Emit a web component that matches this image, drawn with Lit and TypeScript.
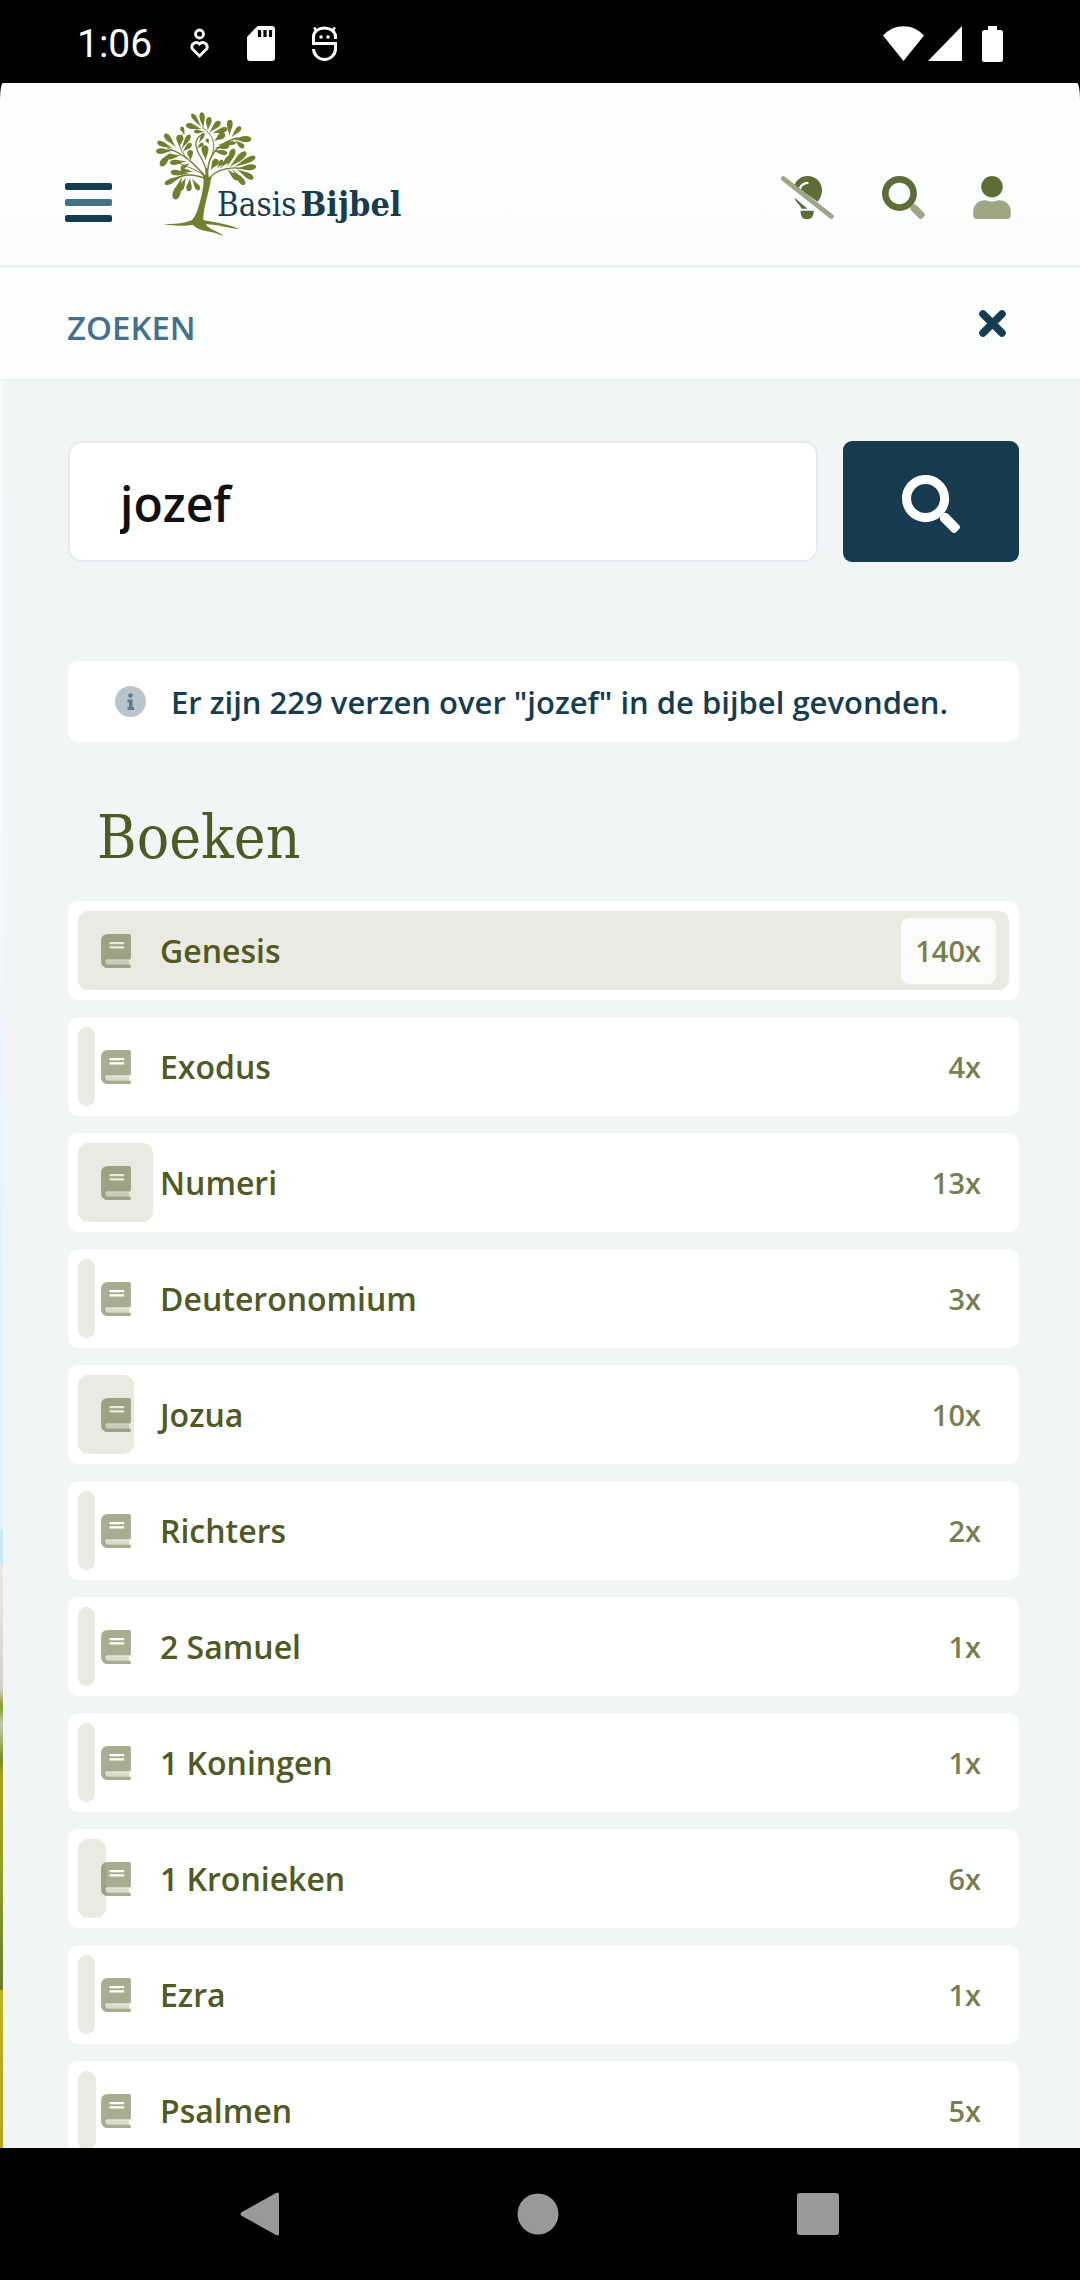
import { LitElement, html, svg, css } from "lit";
import { customElement, property, state } from "lit/decorators.js";

interface Book {
  name: string;
  count: number;
}

const BOOKS: Book[] = [
  { name: "Genesis", count: 140 },
  { name: "Exodus", count: 4 },
  { name: "Numeri", count: 13 },
  { name: "Deuteronomium", count: 3 },
  { name: "Jozua", count: 10 },
  { name: "Richters", count: 2 },
  { name: "2 Samuel", count: 1 },
  { name: "1 Koningen", count: 1 },
  { name: "1 Kronieken", count: 6 },
  { name: "Ezra", count: 1 },
  { name: "Psalmen", count: 5 },
];

/* Leaves of the tree: base x, base y, tip x, tip y, width. */
const LEAVES: number[][] = [
  [190, 86, 185, 37, 15], [184, 82, 155, 41, 13], [186, 88, 138, 74, 16], [194, 96, 162, 94, 11],
  [203, 92, 208, 51, 16], [208, 98, 240, 64, 17], [216, 100, 262, 86, 15], [268, 108, 270, 59, 17],
  [274, 112, 302, 80, 14], [276, 116, 334, 118, 18], [284, 120, 312, 143, 14], [222, 124, 254, 100, 19],
  [134, 104, 124, 80, 11], [118, 142, 120, 104, 21], [124, 148, 150, 104, 14], [128, 156, 154, 130, 14],
  [108, 142, 74, 102, 16], [100, 146, 52, 126, 15], [98, 152, 48, 154, 16], [94, 156, 62, 198, 19],
  [124, 166, 78, 172, 16], [140, 184, 90, 188, 15], [150, 190, 122, 206, 11], [152, 182, 150, 150, 17],
  [176, 130, 192, 100, 10], [170, 145, 190, 130, 11], [197, 182, 194, 136, 20], [206, 132, 200, 116, 10],
  [224, 144, 268, 138, 14], [220, 152, 262, 160, 14], [232, 134, 288, 128, 11], [212, 210, 232, 178, 19],
  [232, 204, 248, 180, 12], [240, 204, 274, 168, 16], [262, 200, 282, 146, 17], [268, 202, 318, 156, 18],
  [280, 202, 346, 170, 16], [288, 206, 348, 200, 17], [290, 208, 340, 236, 16], [276, 208, 314, 254, 16],
  [262, 208, 294, 240, 14], [160, 216, 122, 210, 12], [148, 222, 92, 216, 16], [130, 226, 74, 252, 15],
  [126, 230, 104, 298, 22], [138, 232, 120, 272, 15], [150, 234, 146, 274, 16], [156, 236, 178, 270, 14],
];

function leafPath([bx, by, tx, ty, w]: number[]): string {
  const dx = tx - bx;
  const dy = ty - by;
  const len = Math.hypot(dx, dy);
  const nx = (-dy / len) * w * 0.62;
  const ny = (dx / len) * w * 0.62;
  const at = (t: number, s: number) =>
    `${(bx + dx * t + nx * s).toFixed(1)} ${(by + dy * t + ny * s).toFixed(1)}`;
  return `M${at(0, 0)}C${at(0.3, 0.2)} ${at(0.5, 0.8)} ${at(0.72, 0.85)}C${at(0.9, 0.85)} ${at(1, 0.45)} ${at(1, 0)}C${at(1, -0.45)} ${at(0.9, -0.85)} ${at(0.72, -0.85)}C${at(0.5, -0.8)} ${at(0.3, -0.2)} ${at(0, 0)}z`;
}

const tree = html`
  <svg class="tree" viewBox="48 36 300 375" aria-hidden="true">
    <g fill="none" stroke="#71802f" stroke-linecap="round" stroke-width="4">
      <path d="M197 234C165 190 125 158 84 146" />
      <path d="M192 222C160 190 122 168 116 126C116 112 126 104 132 98" stroke-width="3" />
      <path d="M198 212C196 180 164 158 168 128C171 112 182 104 192 100" />
      <path d="M203 212C206 160 238 130 290 114" />
      <path d="M208 184C232 136 222 106 188 84" stroke-width="3" />
      <path d="M206 236C232 204 276 200 314 206" />
      <path d="M196 236C164 222 132 222 108 236" />
      <path d="M190 226C164 204 128 196 104 184" stroke-width="3" />
    </g>
    <path fill="#71802f" d="M188 226C195 240 188 280 178 312C172 334 166 350 156 360C132 372 100 371 70 373C100 378 136 379 158 374C176 396 214 390 250 408C236 394 208 390 197 373C230 372 264 385 298 388C270 372 226 368 190 360C188 330 206 284 214 232L206 230L204 205L197 205L196 224z" />
    <g fill="#71802f">${LEAVES.map((l) => svg`<path d=${leafPath(l)} />`)}</g>
  </svg>
`;

const RING =
  "M208 0C93.1 0 0 93.1 0 208s93.1 208 208 208 208-93.1 208-208S322.9 0 208 0zm0 336a128 128 0 1 1 0-256 128 128 0 0 1 0 256z";
const HANDLE =
  "M505 442.7L405.3 343c-4.5-4.5-10.6-7-17-7H372a209 209 0 0 1-36 36v16.3c0 6.4 2.5 12.5 7 17l99.7 99.7c9.4 9.4 24.6 9.4 33.9 0l28.3-28.3c9.4-9.4 9.4-24.6.1-34z";

@customElement("status-bar")
export class StatusBar extends LitElement {
  static styles = css`
    :host {
      display: flex;
      align-items: center;
      justify-content: space-between;
      height: 83px;
      padding: 4px 77px 0 77px;
      box-sizing: border-box;
      background: #000;
      color: #fff;
      font: 400 39px/44px Roboto, "Liberation Sans", sans-serif;
      flex: none;
    }
    .group {
      display: flex;
      align-items: center;
    }
    .left { gap: 37px; }
    .right { gap: 4px; }
    .battery { margin-left: 16px; }
    svg { display: block; }
  `;

  render() {
    return html`
      <div class="group left">
        <time>1:06</time>
        <svg width="21" height="31" viewBox="0 0 21 31" fill="none" stroke="#fff" stroke-width="2.8" aria-hidden="true">
          <circle cx="10.5" cy="6" r="4" />
          <path d="M10.5 28L3 20.5A4.5 4.500 0 0 1 10.5 16A4.5 4.500 0 0 1 18 20.5z" />
        </svg>
        <svg width="28" height="35" viewBox="0 0 28 35" aria-hidden="true">
          <path fill="#fff" d="M10.5 0H25a3 3 0 0 1 3 3V32a3 3 0 0 1-3 3H3a3 3 0 0 1-3-3V11z" />
          <path stroke="#000" stroke-width="3.2" d="M12.5 4v7M18 4v7M23.5 4v7" />
        </svg>
        <svg width="25" height="35" viewBox="0 0 25 35" fill="none" stroke="#fff" stroke-width="3" aria-hidden="true">
          <path d="M23.5 13V11C23.5 5 18 2 12.5 2S1.5 5 1.5 11V17.5H23.5V23C23.5 29 18 33.5 12.5 33.5S1.5 29 1.5 23" />
          <path d="M2 1.5L5 5M23 1.5L20 5" stroke-width="2.5" />
          <circle cx="9" cy="11" r="1.8" fill="#fff" stroke="none" />
          <circle cx="16" cy="11" r="1.8" fill="#fff" stroke="none" />
        </svg>
      </div>
      <div class="group right">
        <svg width="41" height="35" viewBox="0 0 41 35" fill="#fff" aria-hidden="true">
          <path d="M20.5 35L0 9.5C11 -3 30 -3 41 9.5z" />
        </svg>
        <svg width="34" height="35" viewBox="0 0 34 35" fill="#fff" aria-hidden="true"><path d="M34 0V35H0z" /></svg>
        <svg class="battery" width="21" height="36" viewBox="0 0 21 36" fill="#fff" aria-hidden="true">
          <path d="M6 0h9v4h3.5a2.5 2.5 0 0 1 2.5 2.5v27a2.5 2.5 0 0 1-2.5 2.5h-16a2.5 2.5 0 0 1-2.5-2.5v-27a2.5 2.5 0 0 1 2.5-2.5h3.5z" />
        </svg>
      </div>
    `;
  }
}

@customElement("site-header")
export class SiteHeader extends LitElement {
  static styles = css`
    :host {
      display: block;
      flex: none;
    }
    header {
      display: flex;
      align-items: flex-end;
      padding: 29px 69px 28px 65px;
      border-bottom: 3px solid #eef1f4;
      border-radius: 3px 3px 0 0 / 17px 17px 0 0;
      background: linear-gradient(#ffffff, #fdfefe 40%, #fbfcfe);
    }
    button {
      display: block;
      padding: 0;
      border: 0;
      background: none;
      cursor: pointer;
    }
    svg { display: block; }
    .menu {
      display: grid;
      gap: 9px;
      width: 47px;
      margin-bottom: 15px;
    }
    .line {
      height: 7px;
      border-radius: 2px;
      background: #163c50;
    }
    .line.mid { background: #42718a; }
    .logo {
      display: flex;
      align-items: flex-end;
      margin-left: 44px;
      color: #163c50;
      text-decoration: none;
      font: 400 33px/40px "DejaVu Serif Condensed", "DejaVu Serif", serif;
    }
    .tree {
      width: 100px;
      height: 125px;
    }
    .word {
      margin: 0 0 12px -39px;
      white-space: nowrap;
    }
    .word b {
      margin-left: 4px;
      font-size: 34px;
    }
    nav {
      display: flex;
      gap: 48px;
      margin: 0 0 18px auto;
    }
  `;

  render() {
    return html`
      <header>
        <button class="menu" aria-label="Menu">
          <span class="line"></span><span class="line mid"></span><span class="line"></span>
        </button>
        <a class="logo" href="#">${tree}<span class="word">Basis<b>Bijbel</b></span></a>
        <nav>
          <button aria-label="Licht">
            <svg width="53" height="43" viewBox="122 528 160 130" aria-hidden="true">
              <path fill="#606c35" d="M162 556C170 538 184 528 202 528C228 528 246 548 246 572C246 585 240 596 233 606z" />
              <path fill="none" stroke="#fff" stroke-width="7" stroke-linecap="round" d="M179 567C182 556 191 550 202 549" />
              <path fill="#606c35" d="M163 594L202 627H184C180 616 166 608 163 594zM181 633H221C221 645 216 658 206 658H194C186 658 181 645 181 633z" />
              <path stroke="#9fa684" stroke-width="15" stroke-linecap="round" d="M129 536L274 650" />
            </svg>
          </button>
          <button aria-label="Zoeken">
            <svg width="43" height="43" viewBox="0 0 512 512" aria-hidden="true">
              <path fill="#9fa684" d=${HANDLE} /><path fill="#606c35" d=${RING} />
            </svg>
          </button>
          <button aria-label="Account">
            <svg width="38" height="43" viewBox="0 0 448 512" aria-hidden="true">
              <path fill="#606c35" d="M352 128A128 128 0 1 1 224 0a128 128 0 0 1 128 128z" />
              <path fill="#9fa684" d="M313.6 288h-16.7a174.1 174.1 0 0 1-145.8 0h-16.7A134.4 134.4 0 0 0 0 422.4V464a48 48 0 0 0 48 48h352a48 48 0 0 0 48-48v-41.6A134.4 134.4 0 0 0 313.6 288z" />
            </svg>
          </button>
        </nav>
      </header>
    `;
  }
}

@customElement("book-row")
export class BookRow extends LitElement {
  @property({ attribute: false }) book: Book = { name: "", count: 0 };
  @property({ type: Number }) max = 1;

  static styles = css`
    :host { display: block; }
    .row {
      display: grid;
      grid-template-columns: 30px 1fr auto;
      align-items: center;
      column-gap: 29px;
      position: relative;
      height: 99px;
      padding: 0 23px 0 33px;
      box-sizing: border-box;
      border-radius: 10px;
      background: #fff;
      color: #4f5a24;
      text-decoration: none;
      font: 600 32px/44px "Open Sans", "Noto Sans", sans-serif;
    }
    .bar {
      position: absolute;
      inset: 10px auto 10px 10px;
      min-width: 17px;
      border-radius: 10px;
      background: #eaeae2;
    }
    svg {
      position: relative;
      display: block;
      fill: #505c22;
    }
    .name { position: relative; }
    .count {
      position: relative;
      padding: 0 15px 0 14px;
      border-radius: 8px;
      background: rgba(255, 255, 255, 0.8);
      color: #767f50;
      font-size: 29px;
      line-height: 66px;
    }
  `;

  render() {
    const share = Math.ceil((this.book.count / this.max) * 100);
    return html`
      <a class="row" href="#">
        <span class="bar" style="width: calc(${share}% - 20px)"></span>
        <svg width="30" height="34" viewBox="0 0 448 512" aria-hidden="true">
          <path opacity="0.22" d="M80 396H420V458H80A31 31 0 0 1 80 396z" />
          <path opacity="0.5" fill-rule="evenodd" d="M96 0H424a24 24 0 0 1 24 24V360a24 24 0 0 1-24 24H96a37 37 0 0 0 0 74H424a24 24 0 0 1 24 24a24 24 0 0 1-24 30H96A96 96 0 0 1 0 416V96A96 96 0 0 1 96 0zM134 122a8 8 0 0 0-8 8v18a8 8 0 0 0 8 8H340a8 8 0 0 0 8-8v-18a8 8 0 0 0-8-8zM134 186a8 8 0 0 0-8 8v18a8 8 0 0 0 8 8H340a8 8 0 0 0 8-8v-18a8 8 0 0 0-8-8z" />
        </svg>
        <span class="name">${this.book.name}</span>
        <span class="count">${this.book.count}x</span>
      </a>
    `;
  }
}

@customElement("system-nav")
export class SystemNav extends LitElement {
  static styles = css`
    :host {
      display: flex;
      justify-content: space-between;
      align-items: center;
      flex: none;
      height: 132px;
      padding: 0 241px 0 239px;
      box-sizing: border-box;
      background: #000;
    }
    button {
      padding: 0;
      border: 0;
      background: none;
    }
    svg {
      display: block;
      fill: #999;
    }
  `;

  render() {
    return html`
      <button aria-label="Terug">
        <svg width="40" height="46" viewBox="0 0 41 46"><path d="M38 1.5Q41 0 41 3V43Q41 46 38 44.5L3 25Q0 23 3 21z" /></svg>
      </button>
      <button aria-label="Start">
        <svg width="42" height="42" viewBox="0 0 42 42"><circle cx="21" cy="21" r="20.5" /></svg>
      </button>
      <button aria-label="Overzicht">
        <svg width="42" height="42" viewBox="0 0 42 42"><rect width="42" height="42" rx="3" /></svg>
      </button>
    `;
  }
}

@customElement("app-root")
export class AppRoot extends LitElement {
  @state() private query = "jozef";

  static styles = css`
    :host {
      display: flex;
      flex-direction: column;
      height: 100vh;
      background: #000;
      font-family: "Open Sans", "Noto Sans", sans-serif;
    }
    main {
      display: flex;
      flex-direction: column;
      flex: 1;
      min-height: 0;
      overflow: hidden;
      background: #f2f5f6;
    }
    .top {
      background: #000;
    }
    .title {
      display: flex;
      align-items: center;
      justify-content: space-between;
      flex: none;
      height: 113px;
      padding: 0 74px 0 67px;
      box-sizing: border-box;
      border-bottom: 2px solid #eef0f2;
      background: #fcfefe;
    }
    .title h1 {
      margin: 0;
      padding-top: 8px;
      color: #45708a;
      font-size: 33px;
      line-height: 44px;
      font-weight: 600;
    }
    button {
      padding: 0;
      border: 0;
      background: none;
      cursor: pointer;
    }
    svg { display: block; }
    .body {
      flex: 1;
      min-height: 0;
      overflow: hidden;
      padding: 60px 61px 0 65px;
      border-left: 3px solid;
      border-image: linear-gradient(
        #fafcfd 0, #f6fbfd 24%, #e3f3fc 50%, #dff2fc 65%, #c6e8f5 65%, #c6e8f5 67%,
        #eee8e4 67%, #e5dedb 70%, #d5cec9 74%, #8a9a28 75%, #c5c9b0 76%, #7c8c2e 78%,
        #a9a21a 79%, #93a026 84%, #6b7a33 91%, #bdb41c 91%, #b9a41c 100%
      ) 1;
    }
    form {
      display: flex;
      gap: 25px;
      margin-bottom: 99px;
    }
    input {
      flex: 1;
      min-width: 0;
      height: 121px;
      padding: 4px 50px 0;
      box-sizing: border-box;
      border: 2px solid #e7eaec;
      border-radius: 14px;
      background: #fff;
      color: #111;
      font: 600 48px/64px "Open Sans", "Noto Sans", sans-serif;
      outline: none;
    }
    .submit {
      display: grid;
      place-items: center;
      width: 176px;
      padding-top: 4px;
      border-radius: 9px;
      background: #163b4f;
    }
    .info {
      display: flex;
      align-items: center;
      gap: 25px;
      min-height: 81px;
      margin: 0;
      padding: 0 47px;
      box-sizing: border-box;
      border-radius: 10px;
      background: #fff;
      color: #163c50;
      font-size: 31px;
      line-height: 40px;
      font-weight: 600;
    }
    .info svg { flex: none; }
    h2 {
      margin: 55px 0 24px;
      padding-left: 29px;
      color: #4f5a24;
      font: 400 60px/80px "DejaVu Serif Condensed", "DejaVu Serif", serif;
    }
    ul {
      display: grid;
      gap: 17px;
      margin: 0;
      padding: 0;
      list-style: none;
    }
  `;

  private onInput(e: Event) {
    this.query = (e.target as HTMLInputElement).value;
  }

  render() {
    const max = Math.max(...BOOKS.map((b) => b.count));
    return html`
      <status-bar></status-bar>
      <main>
        <div class="top"><site-header></site-header></div>
        <div class="title">
          <h1><label for="query">ZOEKEN</label></h1>
          <button aria-label="Sluiten">
            <svg width="27" height="27" viewBox="0 0 27 27" fill="none" stroke="#163c50" stroke-width="7.5" stroke-linecap="round">
              <path d="M4 4L23 23M23 4L4 23" />
            </svg>
          </button>
        </div>
        <section class="body">
          <form @submit=${(e: Event) => e.preventDefault()}>
            <input id="query" type="text" .value=${this.query} @input=${this.onInput} />
            <button class="submit" aria-label="Zoek">
              <svg width="58" height="58" viewBox="0 0 512 512" fill="#fff"><path d=${RING} /><path d=${HANDLE} /></svg>
            </button>
          </form>
          <p class="info">
            <svg width="31" height="31" viewBox="0 0 31 31" aria-hidden="true">
              <circle cx="15.5" cy="15.5" r="15.5" fill="#b9c4cc" />
              <circle cx="15.5" cy="9.5" r="2.3" fill="#5d7c8c" />
              <path fill="#5d7c8c" d="M12.5 13.5h5v7.5h1.5v3h-6.5v-3h1.5v-4.500h-1.5z" />
            </svg>
            <span>Er zijn 229 verzen over "jozef" in de bijbel gevonden.</span>
          </p>
          <h2>Boeken</h2>
          <ul>
            ${BOOKS.map((b) => html`<li><book-row .book=${b} .max=${max}></book-row></li>`)}
          </ul>
        </section>
      </main>
      <system-nav></system-nav>
    `;
  }
}
